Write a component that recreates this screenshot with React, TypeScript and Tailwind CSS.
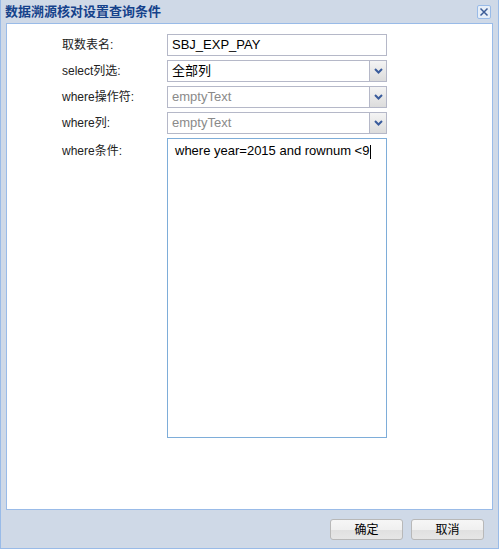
import React from 'react';

const font = { fontFamily: '"Liberation Sans", "Noto Sans CJK SC", sans-serif' };

const Arrow: React.FC = () => (
  <div className="w-[17px] h-full border-l border-[#b5b8c8] bg-gradient-to-b from-[#f4f4f4] to-[#dcdcdc] flex items-center justify-center">
    <svg width="9" height="6" viewBox="0 0 9 6">
      <path d="M1 1 L4.5 4.5 L8 1" stroke="#3a5c9c" strokeWidth="2" fill="none" />
    </svg>
  </div>
);

const Field: React.FC<{ value: string; empty?: boolean; combo?: boolean }> = ({ value, empty, combo }) => (
  <div className="w-[220px] h-[22px] border border-[#b5b8c8] bg-white flex items-stretch">
    <div className={`flex-1 flex items-center px-[4px] text-[13px] ${empty ? 'text-[#8a8a8a]' : 'text-black'}`}>
      {value}
    </div>
    {combo && <Arrow />}
  </div>
);

const Row: React.FC<{ label: string; children: React.ReactNode }> = ({ label, children }) => (
  <div className="flex items-center h-[22px]">
    <div className="w-[105px] text-[12px] text-[#222]">{label}</div>
    {children}
  </div>
);

export default function App() {
  return (
    <div style={font} className="w-[499px] h-[549px] bg-[#cfd9e7] border border-[#99bbe8] border-t-0 flex flex-col">
      <div className="h-[23px] flex items-center justify-between pl-[4px] pr-[7px]">
        <span className="text-[13px] font-bold text-[#15428b]">数据溯源核对设置查询条件</span>
        <div className="w-[14px] h-[14px] border border-[#99bbe8] rounded-[2px] bg-[#e6eef8] flex items-center justify-center">
          <svg width="10" height="10" viewBox="0 0 10 10">
            <path d="M1.5 1.5 L8.5 8.5 M8.5 1.5 L1.5 8.5" stroke="#3d5d97" strokeWidth="1.5" />
          </svg>
        </div>
      </div>
      <div className="mx-[5px] h-[487px] bg-white border border-[#99bbe8] pt-[10px] pl-[55px] flex flex-col gap-[4px]">
        <Row label="取数表名:">
          <Field value="SBJ_EXP_PAY" />
        </Row>
        <Row label="select列选:">
          <Field value="全部列" combo />
        </Row>
        <Row label="where操作符:">
          <Field value="emptyText" empty combo />
        </Row>
        <Row label="where列:">
          <Field value="emptyText" empty combo />
        </Row>
        <div className="flex items-start">
          <div className="w-[105px] text-[12px] text-[#222] pt-[4px]">where条件:</div>
          <div className="w-[220px] h-[300px] border border-[#7eadd9] bg-white px-[7px] pt-[2px] text-[13px] text-black">
            where year=2015 and rownum &lt;9<span className="inline-block w-px h-[14px] bg-black align-middle ml-px" />
          </div>
        </div>
      </div>
      <div className="flex justify-end gap-[8px] pr-[14px] pt-[9px]">
        {['确定', '取消'].map((t) => (
          <button
            key={t}
            className="w-[73px] h-[21px] rounded-[3px] border border-[#b8b8b8] bg-[linear-gradient(#f6f6f6_0%,#f0f0f0_50%,#e0e0e0_51%,#e6e6e6_100%)] text-[12px] text-black"
          >
            {t}
          </button>
        ))}
      </div>
    </div>
  );
}
